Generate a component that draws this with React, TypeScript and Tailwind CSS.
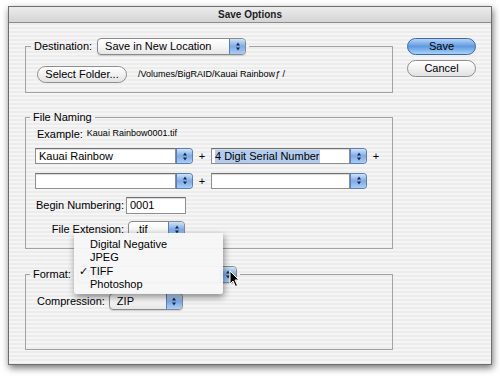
import React from 'react';

function Stepper() {
  return (
    <div className="flex w-[16px] shrink-0 items-center justify-center rounded-r-[4px] border-l border-[#5b7fb5] bg-gradient-to-b from-[#cfe2f9] via-[#7eaae6] to-[#a9cdf5]">
      <svg width="10" height="13" viewBox="0 0 10 13">
        <polygon points="3,5.5 5,2.5 7,5.5" fill="#16284a" />
        <polygon points="3,7.5 5,10.5 7,7.5" fill="#16284a" />
      </svg>
    </div>
  );
}

function Popup({ text, w }: { text: string; w: string }) {
  return (
    <div className={`flex h-[17px] ${w} shrink-0 overflow-hidden rounded-[4px] border border-[#8a8a8a] bg-gradient-to-b from-white via-[#f6f6f6] to-[#e6e6e6] shadow-[0_1px_1px_rgba(0,0,0,0.15)]`}>
      <span className="flex-1 truncate whitespace-nowrap pl-[7px] text-[11px] leading-[15px] text-black">{text}</span>
      <Stepper />
    </div>
  );
}

function Combo({ text, w, selected }: { text: string; w: string; selected?: boolean }) {
  return (
    <div className={`flex h-[16px] ${w} shrink-0`}>
      <div className="flex flex-1 items-center border border-[#8f8f8f] border-t-[#6f6f6f] bg-white pl-[3px] shadow-[inset_0_1px_1px_rgba(0,0,0,0.15)]">
        <span className={`whitespace-nowrap text-[11px] leading-[13px] text-black ${selected ? 'bg-[#b3cbee]' : ''}`}>{text}</span>
      </div>
      <div className="flex rounded-r-[4px] border border-l-0 border-[#5b7fb5]">
        <Stepper />
      </div>
    </div>
  );
}

function PillButton({ label, w, primary }: { label: string; w: string; primary?: boolean }) {
  return (
    <div
      className={`flex h-[17px] ${w} shrink-0 items-center justify-center whitespace-nowrap rounded-full border text-[11px] text-black ${
        primary
          ? 'border-[#3a66a8] bg-gradient-to-b from-[#b7d3f4] via-[#5f99e0] to-[#a8d2f8]'
          : 'border-[#8e8e8e] bg-gradient-to-b from-white via-[#f1f1f1] to-[#e2e2e2]'
      }`}
    >
      {label}
    </div>
  );
}

function Cursor() {
  return (
    <svg width="12" height="18" viewBox="0 0 12 18">
      <path d="M1 1 L1 14 L4 11 L6.5 16.5 L8.5 15.5 L6 10 L10 10 Z" fill="#000" stroke="#fff" strokeWidth="1" />
    </svg>
  );
}

export default function App() {
  const stripes =
    'bg-[repeating-linear-gradient(180deg,#ececec_0px,#ececec_2px,#f5f5f5_2px,#f5f5f5_4px)]';
  return (
    <div className="relative h-[376px] w-[500px] overflow-hidden bg-white pl-[8px] pt-[6px] font-['Liberation_Sans',Arial,sans-serif] text-black">
      <div className={`flex h-[359px] w-[484px] flex-col border border-[#6e6e6e] shadow-[1px_3px_7px_rgba(0,0,0,0.55)] ${stripes}`}>
        <div className="flex h-[16px] items-center justify-center border-b border-[#8c8c8c] bg-gradient-to-b from-[#ececec] to-[#d4d4d4] text-[10px] font-bold text-[#1e1e1e]">
          Save Options
        </div>
        <div className="flex pl-[16px] pt-[15px]">
          <div className="flex w-[368px] flex-col">
            {/* destination */}
            <fieldset className="border border-[#a3a3a3]">
              <legend className="ml-[5px] px-[3px]">
                <div className="flex items-center gap-[5px]">
                  <span className="whitespace-nowrap text-[11px]">Destination:</span>
                  <Popup text="Save in New Location" w="w-[149px]" />
                </div>
              </legend>
              <div className="flex items-center gap-[11px] pb-[9px] pl-[11px] pt-[11px]">
                <PillButton label="Select Folder..." w="w-[90px]" />
                <span className="whitespace-nowrap text-[9px]">
                  /Volumes/BigRAID/Kauai Rainbow<i>ƒ</i> /
                </span>
              </div>
            </fieldset>

            {/* file naming */}
            <fieldset className="mt-[18px] border border-[#a3a3a3]">
              <legend className="ml-[4px] px-[3px] text-[11px] leading-[13px]">File Naming</legend>
              <div className="pb-[10px] pl-[9px] pt-[3px]">
                <div className="flex h-[14px] items-center gap-[4px] pl-[2px]">
                  <span className="whitespace-nowrap text-[11px]">Example:</span>
                  <span className="whitespace-nowrap text-[9px]">Kauai Rainbow0001.tif</span>
                </div>
                <div className="mt-[7px] flex items-center">
                  <Combo text="Kauai Rainbow" w="w-[158px]" />
                  <span className="w-[18px] text-center text-[11px]">+</span>
                  <Combo text="4 Digit Serial Number" w="w-[156px]" selected />
                  <span className="w-[18px] text-center text-[11px]">+</span>
                </div>
                <div className="mt-[8px] flex items-center">
                  <Combo text="" w="w-[158px]" />
                  <span className="w-[18px] text-center text-[11px]">+</span>
                  <Combo text="" w="w-[156px]" />
                </div>
                <div className="mt-[8px] flex items-center gap-[2px]">
                  <span className="w-[89px] shrink-0 whitespace-nowrap text-right text-[11px]">Begin Numbering:</span>
                  <div className="flex h-[17px] w-[60px] items-center border border-[#8f8f8f] border-t-[#6f6f6f] bg-white pl-[3px] text-[11px] shadow-[inset_0_1px_1px_rgba(0,0,0,0.15)]">
                    0001
                  </div>
                </div>
                <div className="mt-[7px] flex items-center gap-[4px]">
                  <span className="w-[89px] shrink-0 whitespace-nowrap text-right text-[11px]">File Extension:</span>
                  <Popup text=".tif" w="w-[57px]" />
                </div>
              </div>
            </fieldset>

            {/* format */}
            <fieldset className="mt-[17px] border border-[#a3a3a3]">
              <legend className="ml-[4px] px-[3px]">
                <div className="flex items-center gap-[6px]">
                  <span className="whitespace-nowrap text-[11px]">Format:</span>
                  <Popup text="TIFF" w="w-[160px]" />
                </div>
              </legend>
              <div className="flex items-center gap-[4px] pb-[39px] pl-[11px] pt-[10px]">
                <span className="whitespace-nowrap text-[11px]">Compression:</span>
                <Popup text="ZIP" w="w-[74px]" />
              </div>
            </fieldset>
          </div>

          <div className="ml-[14px] flex w-[69px] flex-col gap-[5px]">
            <PillButton label="Save" w="w-[69px]" primary />
            <PillButton label="Cancel" w="w-[69px]" />
          </div>
        </div>
      </div>

      {/* open format menu */}
      <div className="absolute left-[74px] top-[233px] w-[149px] rounded-b-[3px] bg-[#f7f7f7]/95 pb-[3px] pt-[4px] shadow-[1px_3px_7px_rgba(0,0,0,0.45)]">
        {['Digital Negative', 'JPEG', 'TIFF', 'Photoshop'].map((item) => (
          <div key={item} className="flex h-[13.5px] items-center whitespace-nowrap text-[11px]">
            <span className="w-[16px] pl-[5px] text-[11px]">{item === 'TIFF' ? '✓' : ''}</span>
            <span>{item}</span>
          </div>
        ))}
      </div>

      <div className="absolute left-[229px] top-[270px]">
        <Cursor />
      </div>
    </div>
  );
}
